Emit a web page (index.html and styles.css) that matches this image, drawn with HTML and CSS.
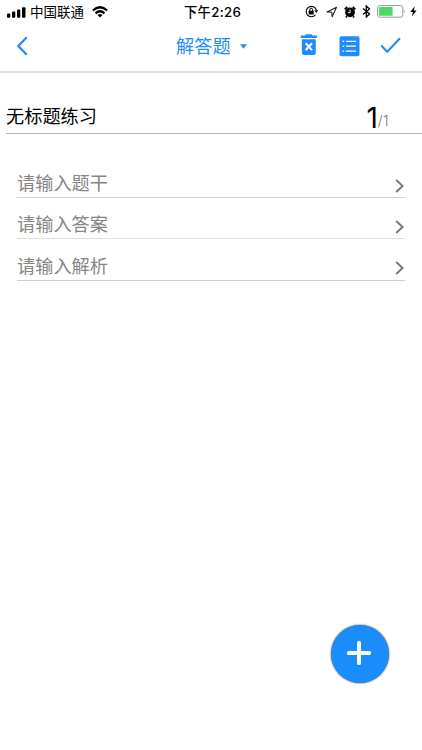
FILE: index.html
```html
<!DOCTYPE html>
<html lang="zh-CN">
<head>
<meta charset="utf-8">
<title>解答题</title>
<link rel="stylesheet" href="styles.css">
</head>
<body>
<div class="screen">
  <div class="status">
    <div class="status-left">
      <svg class="signal" width="19" height="11" viewBox="0 0 19 11"><rect x="0" y="6.5" width="3.3" height="4.2" rx="1"/><rect x="5" y="4.5" width="3.3" height="6.2" rx="1"/><rect x="10" y="2.5" width="3.3" height="8.2" rx="1"/><rect x="15" y="0.2" width="3.5" height="10.5" rx="1"/></svg>
      <span class="carrier">中国联通</span>
      <svg class="wifi" width="16" height="12" viewBox="0 0 16 12"><g fill="none" stroke="#000" stroke-width="2.3"><path d="M.9 4.5Q8-2.1 15.1 4.5"/><path d="M3.6 7.3Q8 3.3 12.4 7.3"/></g><path d="M5.5 9Q8 7 10.5 9L8 11.5Z"/></svg>
    </div>
    <div class="time">下午2:26</div>
    <div class="status-right">
      <svg width="13" height="13" viewBox="0 0 13 13"><path d="M10.4 9.9A5.2 5.2 0 1 1 11.4 5.2" fill="none" stroke="#000" stroke-width="1.1"/><path d="M9.4 5.2H13L11.3 8Z"/><rect x="3.7" y="5.7" width="5" height="3.8" rx=".5"/><path d="M4.8 6V4.6a1.4 1.4 0 0 1 2.8 0V6" fill="none" stroke="#000"/></svg>
      <svg class="locate" width="12" height="12" viewBox="0 0 12 12"><path d="M1 5.9 10.5 1.3 6.2 10.8 5.8 6.2Z" fill="none" stroke="#222" stroke-width="1.1" stroke-linejoin="round"/></svg>
      <svg class="alarm" width="12" height="12" viewBox="0 0 12 12"><circle cx="6" cy="6.3" r="4.9"/><path d="M.7 3.3 3.2.9M11.3 3.3 8.8.9M2.8 10.2 2 11.4M9.2 10.2 10 11.4" stroke="#000" stroke-width="1.8"/><path d="M6.1 3.7V6.7H4" fill="none" stroke="#fff" stroke-width="1"/></svg>
      <svg class="bt" width="9" height="13" viewBox="0 0 9 13"><path d="M1 3.6 7.5 9.1 4.3 12V1L7.5 3.9 1 9.4" fill="none" stroke="#000" stroke-width="1.3"/></svg>
      <svg class="battery" width="29" height="13" viewBox="0 0 29 13"><rect x=".6" y=".6" width="25.2" height="11.6" rx="2.2" fill="none" stroke="#999" stroke-width="1"/><rect x="2" y="2" width="13.6" height="8.8" rx=".7" fill="#4cd964"/><path d="M27.2 4.4Q28.8 6.3 27.2 8.2Z" fill="#888"/></svg>
      <svg class="bolt" width="7" height="11" viewBox="0 0 7 11"><path d="M4.9.3.3 6.1H3L1.8 10.5 6.6 4.6H3.8Z"/></svg>
    </div>
  </div>

  <header class="nav">
    <svg class="back" width="12" height="20" viewBox="0 0 12 20"><path d="M10.8 1.2 2.3 10 10.8 18.8" fill="none" stroke="currentColor" stroke-width="2.2"/></svg>
    <div class="title"><span>解答题</span><svg width="7" height="5" viewBox="0 0 7 5"><path d="M0 .2H7L3.5 4.8Z" fill="currentColor"/></svg></div>
    <div class="actions">
      <svg class="trash" width="18" height="22" viewBox="0 0 18 22"><path d="M.8 1.5H5L6.1.2H11.3L12.4 1.5H16.9V4H.8Z" fill="currentColor"/><path d="M1.9 5.2H15.8V19.1Q15.8 21.1 13.8 21.1H3.9Q1.9 21.1 1.9 19.1Z" fill="currentColor"/><path d="M5.7 9.3 12 16.1M12 9.3 5.7 16.1" stroke="#fff" stroke-width="2.1"/></svg>
      <svg class="list" width="21" height="21" viewBox="0 0 21 21"><rect x=".5" y=".2" width="20" height="20" rx="1.8" fill="currentColor"/><path d="M3.5 5.4H5.3M3.5 10.2H5.3M3.5 15.1H5.3M7 5.4H17.2M7 10.2H17.2M7 15.1H17.2" stroke="#fff" stroke-width="1.3"/></svg>
      <svg class="check" width="21" height="17" viewBox="0 0 21 17"><path d="M1.2 8.6 7.2 14.7 20 1.2" fill="none" stroke="currentColor" stroke-width="2.1"/></svg>
    </div>
  </header>

  <main>
    <div class="heading">
      <span class="name">无标题练习</span>
      <span class="count"><span class="current">1</span><span class="total">/1</span></span>
    </div>
    <div class="fields">
      <div class="field"><span>请输入题干</span><svg width="9" height="14" viewBox="0 0 9 14"><path d="M1.2 1 7.6 7 1.2 13" fill="none" stroke="#777" stroke-width="1.9"/></svg></div>
      <div class="field light"><span>请输入答案</span><svg width="9" height="14" viewBox="0 0 9 14"><path d="M1.2 1 7.6 7 1.2 13" fill="none" stroke="#777" stroke-width="1.9"/></svg></div>
      <div class="field"><span>请输入解析</span><svg width="9" height="14" viewBox="0 0 9 14"><path d="M1.2 1 7.6 7 1.2 13" fill="none" stroke="#777" stroke-width="1.9"/></svg></div>
    </div>
  </main>

  <div class="add"><svg width="24" height="24" viewBox="0 0 24 24"><path d="M12 1.8V22.2M1.8 12H22.2" stroke="#fff" stroke-width="3.9" stroke-linecap="round"/></svg></div>
</div>
</body>
</html>
```
FILE: styles.css
```css
* { box-sizing: border-box; }
body {
  margin: 0;
  background: #fff;
  color: #000;
  font-family: Inter, "Noto Sans CJK SC", sans-serif;
}
svg { display: block; flex: none; }
.screen {
  position: relative;
  width: 422px;
  height: 750px;
  overflow: hidden;
}
.status {
  display: grid;
  grid-template-columns: 184px 1fr auto;
  align-items: center;
  height: 24px;
  padding-right: 5px;
  white-space: nowrap;
}
.status-left, .status-right { display: flex; align-items: center; }
.status-left { padding-left: 7px; }
.carrier { margin-left: 4px; font-size: 13.5px; line-height: 24px; }
.wifi { margin-left: 8px; }
.time { font-size: 13.3px; line-height: 24px; font-weight: 500; letter-spacing: 0.3px; }
.status-right svg { position: relative; top: -0.5px; }
.locate { margin-left: 8px; }
.alarm { margin-left: 6px; }
.bt { margin-left: 6px; }
.battery { margin-left: 6px; }
.bolt { margin-left: 4px; }
.nav {
  display: grid;
  grid-template-columns: 176px 1fr auto;
  align-items: center;
  height: 49px;
  padding-bottom: 3px;
  border-bottom: 2px solid #e0e0e0;
  color: #1e8cfa;
}
.back { margin-left: 16px; }
.title {
  display: flex;
  align-items: center;
  gap: 9px;
  font-size: 18.2px;
  line-height: 26px;
}
.actions { display: flex; align-items: flex-start; height: 26px; padding-right: 21px; }
.trash { margin-top: 1px; }
.list { margin: 3px 0 0 21px; }
.check { margin: 4px 0 0 20px; }
.heading {
  display: flex;
  justify-content: space-between;
  height: 61px;
  margin-left: 6px;
  padding: 30px 33px 0 0;
  border-bottom: 1px solid #b5b5b5;
}
.name { font-size: 18.2px; line-height: 27px; }
.count { display: flex; align-items: flex-start; line-height: 30px; }
.current { font-size: 28px; }
.total { padding-top: 3px; font-size: 14px; font-weight: 300; letter-spacing: 0.4px; color: #777; }
.fields { margin: 23px 17px 0; }
.field {
  display: flex;
  align-items: center;
  justify-content: space-between;
  height: 41px;
  padding-top: 11px;
  border-bottom: 1px solid #cfcfcf;
  font-size: 18.2px;
  line-height: 26px;
  color: #858585;
}
.field span { padding-top: 1px; }
.field.light { border-color: #dedede; }
.field:last-child { height: 42px; }
.field svg { margin: 6px 1px 0 0; }
.add {
  position: absolute;
  left: 331px;
  top: 625px;
  display: flex;
  align-items: center;
  justify-content: center;
  width: 58px;
  height: 58px;
  padding: 0 2px 3px 0;
  border-radius: 50%;
  background: #1b8cfb;
  box-shadow: 0 0 2px #333;
}
```
